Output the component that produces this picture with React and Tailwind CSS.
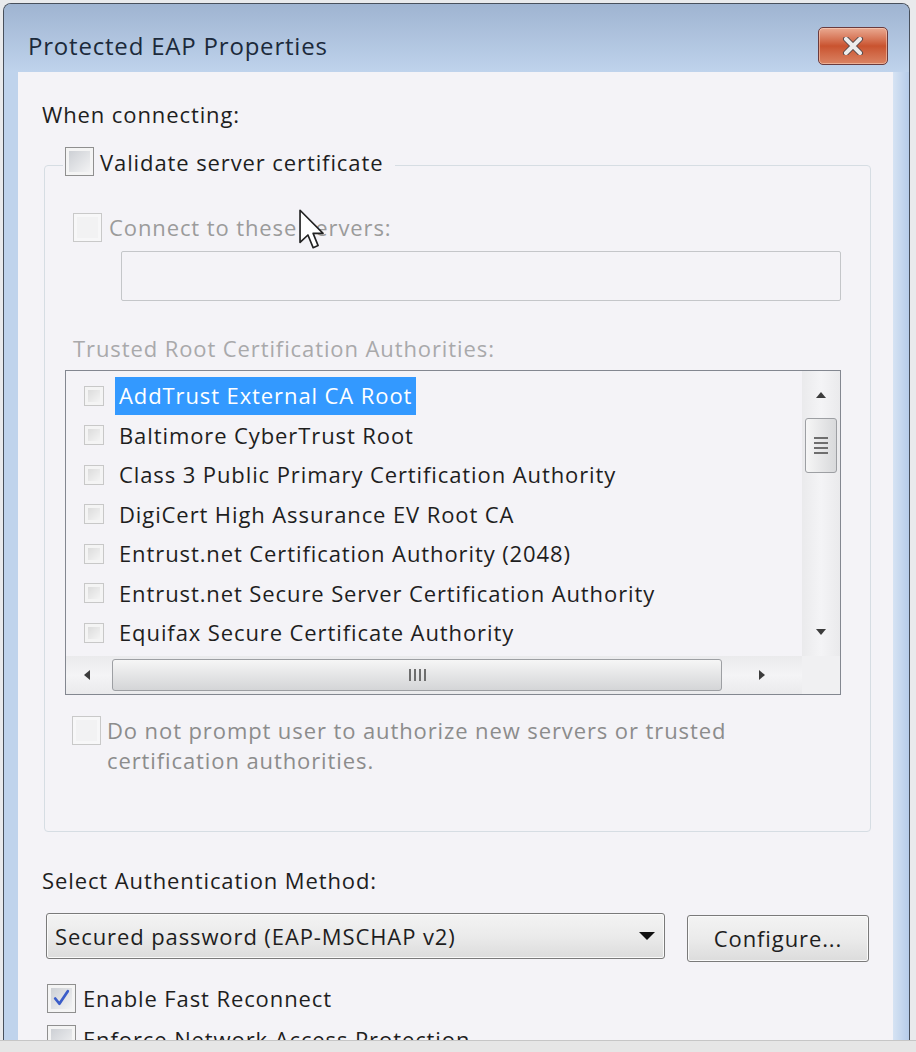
import React from "react";

function Check({ size = 29, disabled = false, checked = false }) {
  const s = size === 29 ? "w-[29px] h-[29px]" : "w-[20px] h-[20px]";
  return (
    <div
      className={`${s} shrink-0 border p-[3px] ${
        disabled ? "border-[#c9c9c9] bg-[#f7f7f8]" : "border-[#8f8f8f] bg-[#f4f4f4]"
      } ${size === 20 ? "border-[#c8c8c8] p-[2px]" : ""}`}
    >
      <div
        className={`w-full h-full ${
          disabled
            ? "bg-[#f2f2f3]"
            : size === 20
            ? "bg-gradient-to-br from-[#dcdcdc] to-[#f4f4f4]"
            : "bg-gradient-to-br from-[#cdd0d5] to-[#f3f3f4]"
        } relative`}
      >
        {checked && (
          <svg viewBox="0 0 20 20" className="absolute inset-0 w-full h-full">
            <path d="M4 10 L8 15 L16 3" fill="none" stroke="#3b5dc9" strokeWidth="2.6" strokeLinecap="round" strokeLinejoin="round" />
          </svg>
        )}
      </div>
    </div>
  );
}

const certs = [
  "AddTrust External CA Root",
  "Baltimore CyberTrust Root",
  "Class 3 Public Primary Certification Authority",
  "DigiCert High Assurance EV Root CA",
  "Entrust.net Certification Authority (2048)",
  "Entrust.net Secure Server Certification Authority",
  "Equifax Secure Certificate Authority",
];

function Tri({ dir }) {
  const paths = {
    up: "M1 8 L6 2 L11 8 Z",
    down: "M1 3 L6 9 L11 3 Z",
    left: "M8 1 L2 6 L8 11 Z",
    right: "M3 1 L9 6 L3 11 Z",
  };
  return (
    <svg viewBox="0 0 12 12" className="w-[12px] h-[12px]">
      <path d={paths[dir]} fill="#3c3c3c" />
    </svg>
  );
}

export default function App() {
  return (
    <div className="w-[916px] h-[1052px] bg-[#d9dadc] flex flex-col overflow-hidden font-['Open_Sans',sans-serif]">
      <div className="flex-1 min-h-0 flex pt-[3px] pl-[3px] pr-[6px] bg-[#e9eaec]">
        <div className="w-[907px] flex flex-col rounded-t-[8px] border border-b-0 border-[#48505c] bg-[#bcd0ea] overflow-hidden">
          {/* title bar */}
          <div className="h-[68px] shrink-0 flex items-end justify-between pb-[7px] pl-[24px] pr-[21px] bg-gradient-to-b from-[#9fb4d1] to-[#bfd3ec]">
            <div className="h-[38px] flex items-center text-[24px] text-[#1c2a3b] tracking-[0.8px]">
              Protected EAP Properties
            </div>
            <div className="w-[70px] h-[38px] rounded-[5px] border border-[#6a3b3e] bg-gradient-to-b from-[#e9a991] via-[#c9532f] to-[#da8363] flex items-center justify-center shadow-[inset_0_0_0_1px_rgba(255,220,200,0.5)]">
              <svg viewBox="0 0 24 18" className="w-[24px] h-[18px]">
                <path d="M5 2 L19 16 M19 2 L5 16" stroke="#5a4a4a" strokeWidth="6" strokeLinecap="round" />
                <path d="M5 2 L19 16 M19 2 L5 16" stroke="#ececec" strokeWidth="4" strokeLinecap="round" />
              </svg>
            </div>
          </div>
          {/* body */}
          <div className="flex-1 min-h-0 flex">
            <div className="w-[14px] shrink-0 bg-[#bfd3ec]" />
            <div className="w-[875px] shrink-0 bg-[#f4f3f7] overflow-hidden relative pl-[24px] text-[22px] tracking-[0.9px] text-[#1e1e1e]">
              <div className="mt-[28px] h-[28px] leading-[28px]">When connecting:</div>

              <fieldset className="mt-[19px] ml-[2px] w-[827px] border border-[#d6dde3] rounded-[4px] pb-[56px]">
                <legend className="ml-[18px] pl-[2px] pr-[12px] pb-[7px] flex items-center gap-[6px] h-[36px]">
                  <Check />
                  <span className="leading-[28px]">Validate server certificate</span>
                </legend>
                <div className="mt-[30px] ml-[28px] flex items-center gap-[7px] h-[29px] text-[#9b9b9b]">
                  <Check disabled />
                  <span>Connect to these servers:</span>
                </div>
                <div className="mt-[9px] ml-[76px] w-[720px] h-[50px] border border-[#c4c6c9] rounded-[2px] bg-[#f4f3f7]" />
                <div className="mt-[33px] ml-[28px] h-[28px] leading-[28px] text-[#a9a9ab]">
                  Trusted Root Certification Authorities:
                </div>
                <div className="mt-[8px] ml-[20px] w-[776px] h-[325px] border border-[#838790] flex flex-col bg-[#f4f3f7]">
                  <div className="flex flex-1 min-h-0">
                    <div className="flex-1 min-w-0 overflow-hidden pt-[5px]">
                      {certs.map((c, i) => (
                        <div key={c} className="h-[39.5px] flex items-center">
                          <div className="ml-[18px] mr-[11px]">
                            <Check size={20} />
                          </div>
                          <span
                            className={`h-[38px] px-[4px] flex items-center whitespace-nowrap ${
                              i === 0 ? "bg-[#3399ff] text-white" : "text-[#1e1e1e]"
                            }`}
                          >
                            {c}
                          </span>
                        </div>
                      ))}
                    </div>
                    {/* vertical scrollbar */}
                    <div className="w-[38px] shrink-0 bg-gradient-to-r from-[#eaeaec] via-[#f4f4f6] to-[#eaeaec] flex flex-col items-center">
                      <div className="h-[47px] w-full flex items-center justify-center pt-[2px]">
                        <Tri dir="up" />
                      </div>
                      <div className="w-[32px] h-[55px] rounded-[3px] border border-[#9d9fa3] bg-gradient-to-r from-[#f6f6f6] to-[#d8d9db] flex flex-col items-center justify-center gap-[3px]">
                        <div className="w-[14px] h-[2px] bg-[#6e6e6e]" />
                        <div className="w-[14px] h-[2px] bg-[#6e6e6e]" />
                        <div className="w-[14px] h-[2px] bg-[#6e6e6e]" />
                        <div className="w-[14px] h-[2px] bg-[#6e6e6e]" />
                      </div>
                      <div className="flex-1" />
                      <div className="h-[46px] w-full flex items-center justify-center pb-[2px]">
                        <Tri dir="down" />
                      </div>
                    </div>
                  </div>
                  {/* horizontal scrollbar */}
                  <div className="h-[38px] shrink-0 flex">
                    <div className="flex-1 flex items-center bg-gradient-to-b from-[#eaeaec] via-[#f4f4f6] to-[#eaeaec]">
                      <div className="w-[44px] h-full flex items-center justify-center">
                        <Tri dir="left" />
                      </div>
                      <div className="w-[610px] h-[32px] ml-[2px] rounded-[3px] border border-[#9d9fa3] bg-gradient-to-b from-[#f6f6f6] to-[#d4d5d7] flex items-center justify-center gap-[3px]">
                        <div className="w-[2px] h-[12px] bg-[#6e6e6e]" />
                        <div className="w-[2px] h-[12px] bg-[#6e6e6e]" />
                        <div className="w-[2px] h-[12px] bg-[#6e6e6e]" />
                        <div className="w-[2px] h-[12px] bg-[#6e6e6e]" />
                      </div>
                      <div className="flex-1 h-full flex items-center justify-center">
                        <Tri dir="right" />
                      </div>
                    </div>
                    <div className="w-[38px] bg-[#f0f0f2]" />
                  </div>
                </div>
                <div className="mt-[21px] ml-[27px] flex items-start gap-[6px] text-[#8c8c8c]">
                  <Check disabled />
                  <div className="leading-[30px] -mt-[1px]">
                    Do not prompt user to authorize new servers or trusted
                    <br />
                    certification authorities.
                  </div>
                </div>
              </fieldset>

              <div className="mt-[34px] h-[28px] leading-[28px]">Select Authentication Method:</div>
              <div className="mt-[19px] flex items-start">
                <div className="ml-[4px] w-[619px] h-[46px] rounded-[3px] border border-[#7a7a7a] bg-gradient-to-b from-[#f3f3f3] via-[#ebebeb] to-[#dcdcdc] flex items-center justify-between pl-[8px] pr-[9px] shadow-[inset_0_0_0_1px_#fafafa]">
                  <span>Secured password (EAP-MSCHAP v2)</span>
                  <svg viewBox="0 0 16 10" className="w-[16px] h-[10px]">
                    <path d="M0 1 L16 1 L8 9 Z" fill="#111" />
                  </svg>
                </div>
                <div className="ml-[22px] mt-[2px] w-[182px] h-[47px] rounded-[3px] border border-[#7a7a7a] bg-gradient-to-b from-[#f3f3f3] via-[#ebebeb] to-[#dcdcdc] flex items-center justify-center shadow-[inset_0_0_0_1px_#fafafa]">
                  Configure...
                </div>
              </div>
              <div className="mt-[22px] ml-[5px] flex items-center gap-[7px] h-[29px]">
                <Check checked />
                <span>Enable Fast Reconnect</span>
              </div>
              <div className="mt-[12px] ml-[5px] flex items-center gap-[7px] h-[29px]">
                <Check />
                <span>Enforce Network Access Protection</span>
              </div>

              {/* mouse cursor */}
              <svg viewBox="0 0 13 20" className="absolute left-[281px] top-[137px] w-[27px] h-[42px]">
                <path d="M0.5 0.5 L0.5 16 L4.3 12.4 L6.8 18.5 L9.2 17.5 L6.8 11.6 L11.6 11.6 Z" fill="#fff" stroke="#222" strokeWidth="0.8" strokeLinejoin="round" />
              </svg>
            </div>
            <div className="w-[16px] shrink-0 bg-gradient-to-r from-[#d6e3f3] to-[#b6cce9]" />
          </div>
        </div>
      </div>
      <div className="h-[12px] shrink-0 bg-[#e6e6e6] border-t border-[#c6c6c6]" />
    </div>
  );
}
